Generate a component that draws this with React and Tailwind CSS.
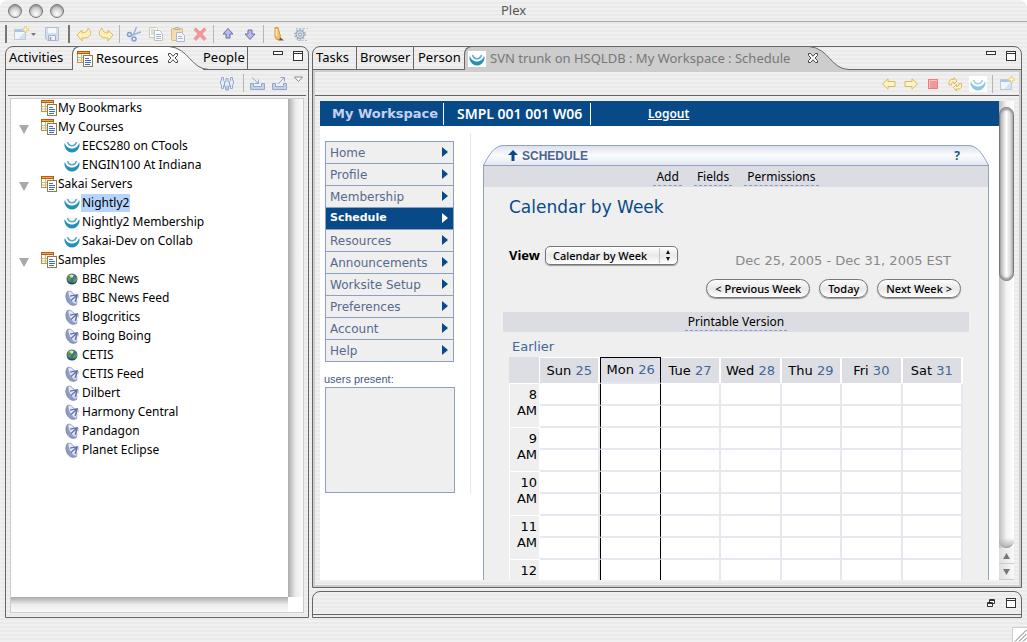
import React from "react";

const STRIPES = "bg-[repeating-linear-gradient(#f0f0f0_0_2px,#eaeaea_2px_4px)]";
const UI = "font-['Noto_Sans','Open_Sans',sans-serif]";
const WEB = "font-['DejaVu_Sans',sans-serif]";

/* ---------- icons ---------- */

function Icon({ children, className = "size-4", box = "0 0 16 16" }) {
  return (
    <svg viewBox={box} className={`${className} shrink-0`} fill="none" aria-hidden="true">
      {children}
    </svg>
  );
}

const NewIcon = () => (
  <Icon>
    <rect x="1.500" y="3.500" width="11" height="10" fill="#eef5fc" stroke="#c3c9cf" />
    <path d="M2 5h10" stroke="#a5c6ec" strokeWidth="2" />
    <path d="M5 13L12 6v7z" fill="#cfe3f7" />
    <path d="M12.500 0v7M9 3.500h7" stroke="#ead28a" strokeWidth="2.500" />
    <path d="M12.500 1.500v4M10.500 3.500h4" stroke="#fff8d0" />
  </Icon>
);
const SaveIcon = () => (
  <Icon>
    <path d="M1.500 1.500h13v13h-11l-2-2z" fill="#d4dfee" stroke="#b3bfd2" />
    <rect x="4" y="2" width="8" height="5" fill="#f5f8fc" />
    <path d="M4.500 9.500h7v5h-7z" fill="#eef2f8" stroke="#a3b2ca" />
    <path d="M6.500 11v3" stroke="#8fa2c0" strokeWidth="1.500" />
  </Icon>
);
const UndoIcon = ({ flip }) => (
  <Icon className={flip ? "size-4 -scale-x-100" : "size-4"}>
    <path
      d="M1 9l5-5v3c3 0 6-1.500 6-5 3 3 3.500 5.500 1.500 8-1.800 2-4.500 2-7.500 2v3z"
      fill="#fdf0bd"
      stroke="#dfb95e"
      strokeLinejoin="round"
    />
  </Icon>
);
const CutIcon = () => (
  <Icon>
    <path d="M10.500 1L7 9.500M15 6L6 9" stroke="#9db4d6" strokeWidth="1.500" />
    <circle cx="3.500" cy="8.500" r="2" stroke="#7f9fd0" strokeWidth="1.500" />
    <circle cx="8" cy="13" r="2" stroke="#7f9fd0" strokeWidth="1.500" />
  </Icon>
);
const CopyIcon = () => (
  <Icon>
    <path d="M1.500 1.500h7l1 1v9h-8z" fill="#f5f8fc" stroke="#d3c9a8" />
    <path d="M3 4h4M3 6h4M3 8h3" stroke="#b3c4e4" />
    <path d="M6.500 4.500h5l3 3v7h-8z" fill="#f7faff" stroke="#ccc19e" />
    <path d="M8 8.500h5M8 10.500h5M8 12.500h5" stroke="#9fb5df" />
  </Icon>
);
const PasteIcon = () => (
  <Icon>
    <rect x="1.500" y="2.500" width="11" height="12" rx="1" fill="#f4dcae" stroke="#d9b883" />
    <path d="M4.500 3.500l1-2h3l1 2z" fill="#e2e2e2" stroke="#b0b0b0" />
    <path d="M6.500 6.500h5l3 3v6h-8z" fill="#f4f7fc" stroke="#aab7cd" />
    <path d="M8 10.500h4M8 12.500h5" stroke="#a4b8dd" />
  </Icon>
);
const DeleteIcon = () => (
  <Icon>
    <path
      d="M2 3.500L4 2l4 4 4-4 2 1.500-4 4.500 4 4.500-2 2-4-4.200-4 4.200-2-2L6 8z"
      fill="#f29a9a"
      stroke="#ee9494"
      strokeLinejoin="round"
    />
  </Icon>
);
const MoveIcon = ({ down }) => (
  <Icon className={down ? "size-4 rotate-180" : "size-4"}>
    <path d="M8 2.500l5 5.500h-3v4H6V8H3z" fill="#b9b8f6" stroke="#6f6f9c" strokeLinejoin="round" />
  </Icon>
);
const MarkerIcon = () => (
  <Icon>
    <path d="M10 11l4 3.500H8z" fill="#6b5a3c" />
    <path d="M5 1.500h3l2.500 9-1.500 3H6.500L5 11z" fill="#f3c063" stroke="#cf9b4a" />
    <path d="M6.500 3v7" stroke="#fff0b8" strokeWidth="1.500" />
  </Icon>
);
const GearIcon = () => (
  <Icon>
    <path d="M4 2.500h12M6 14.500h9" stroke="#a9bfdd" strokeDasharray="2 1.500" />
    <circle cx="8" cy="8.500" r="5" stroke="#a5b6cd" strokeWidth="2" strokeDasharray="1.600 1.540" />
    <circle cx="8" cy="8.500" r="4" fill="#d5dbe3" stroke="#93a1b6" />
    <circle cx="8" cy="8.500" r="1.500" fill="#f3f5f8" stroke="#8796ad" />
  </Icon>
);
const CategoryIcon = () => (
  <Icon>
    <rect x="0.500" y="0.500" width="12" height="11" fill="#fdfaf0" stroke="#b49655" />
    <rect x="0" y="0" width="13" height="3" fill="#b85c14" />
    <path d="M1 1.500h11" stroke="#f2a548" />
    <path d="M4.500 3v8M1 6.500h5M1 9h5" stroke="#c9bc8a" />
    <rect x="6.500" y="4.500" width="9" height="11" fill="#fff" stroke="#8f7b48" />
    <path d="M8 7.500h4M8 9.500h6M8 11.500h6M8 13.500h5" stroke="#3f6cc4" />
  </Icon>
);
const SakaiIcon = ({ soft }) => (
  <Icon>
    <path
      d="M1 5C.2 6 .3 8 1 9.500 2.500 12.800 5 14.500 8 14.500s5.500-1.700 7-5c.7-1.500.8-3.500 0-4.500-.6 3-3.200 5.500-7 5.500S1.600 8 1 5z"
      fill={soft ? "#8cc9dd" : "#2490b8"}
    />
    <path
      d="M3.500 4c.8 2.500 2.500 3.700 4.500 3.700S11.700 6.500 12.500 4"
      stroke={soft ? "#9dd2e2" : "#58abc8"}
      strokeWidth="1.600"
    />
  </Icon>
);
const GlobeIcon = () => (
  <Icon>
    <circle cx="8" cy="8" r="5.500" fill="#3f6c94" />
    <path d="M3.500 5C5 3 7 3 8 3.500L9 6 7 8 6.500 11 4 9zM9.500 8l3-2 .5 3-2.500 3.500L9 10z" fill="#5f9a4a" />
    <path d="M5 4.500l3-1 2 1-2 2.500z" fill="#e3eecb" opacity="0.900" />
    <path d="M3 10a5.500 5.500 0 0010 0c-2.500 2.500-7 2.500-10 0z" fill="#26485f" />
  </Icon>
);
const FeedIcon = () => (
  <Icon>
    <path d="M4 1C.8 4 1.500 10 5 13.500c2 2 5 2.300 7.500 1z" fill="#8d9bc2" stroke="#7e8bb3" />
    <path d="M4 1.200C7 .5 10.500 4 12 8c1 2.800 1.200 5 .3 6.300C9 14 3.500 8 4 1.200z" fill="#e4e9f5" stroke="#98a4c8" />
    <path d="M6 6.200l8-1.700M13.500 5l-2.500 7M7 10.500l6-5.500" stroke="#5d6fa6" strokeWidth="1.200" />
    <path d="M14 5v3.500" stroke="#9aa6c8" />
  </Icon>
);
const PeopleIcon = () => (
  <Icon>
    <g fill="#e4ebf6" stroke="#93a8cc">
      <path d="M2.500 2.500h2v3l1 1v4h-1v3h-2v-3l-1-2V6l1-1z" />
      <path d="M13.500 2.500h-2v3l-1 1v4h1v3h2v-3l1-2V6l-1-1z" />
      <path d="M7 3.500h2v3l1.500 1v4H9.500v3.500h-3v-3.500h-1v-4l1.500-1z" />
    </g>
    <path d="M8 10.500V15" stroke="#93a8cc" />
  </Icon>
);
const TrayIcon = ({ out }) => (
  <Icon className="h-4 w-[17px]" box="0 0 17 16">
    <path d="M1.500 8.500h3v3h8v-3h3v6h-14z" fill="#c3d1e8" stroke="#93a8cc" />
    {out ? (
      <path d="M7 9l6.500-6.500M9.500 2.500h4v4" stroke="#93a8cc" />
    ) : (
      <path d="M3 2.500l6.500 6M9.500 4.500v4h-4" stroke="#93a8cc" />
    )}
  </Icon>
);
const MenuTriangle = () => (
  <Icon className="h-[7px] w-[11px]" box="0 0 11 7">
    <path d="M1.500 1h8L5.500 5.500z" fill="#fff" stroke="#888" />
  </Icon>
);
const NavArrow = ({ flip }) => (
  <Icon className={flip ? "size-4 -scale-x-100" : "size-4"}>
    <path d="M1.500 8L7 2.800V5.500h7v5H7v2.700z" fill="#fdf3c4" stroke="#dfb95e" strokeLinejoin="round" />
  </Icon>
);
const StopIcon = () => (
  <Icon>
    <rect x="3.500" y="3.500" width="9" height="9" fill="#f29a9a" stroke="#e88080" />
    <path d="M4.500 12V4.500H12" stroke="#f9c4c4" />
  </Icon>
);
const RefreshIcon = () => (
  <Icon>
    <path d="M2 9V6.500C2 4 4 3 7 3.500V1.500L10 5 7 8V6C5 6 4.500 6.500 4.500 9z" fill="#fdf3c4" stroke="#dfb95e" />
    <path d="M14.500 7.500V10c0 2.500-2 3.500-5 3v2l-3-3.500 3-3v2c2 0 2.500-.5 2.500-3z" fill="#fdf3c4" stroke="#dfb95e" />
  </Icon>
);
const CloseIcon = () => (
  <Icon className="size-3" box="0 0 12 12">
    <path
      d="M1.500 1.500h2L6 4.300 8.500 1.500h2v2L8 6l2.500 2.500v2h-2L6 7.700 3.500 10.500h-2v-2L4 6 1.500 3.500z"
      fill="#fff"
      stroke="#444"
    />
  </Icon>
);
const MinIcon = () => (
  <Icon className="h-3 w-2.5" box="0 0 10 12">
    <rect x="0.500" y="1.500" width="9" height="3" fill="#fff" stroke="#333" />
  </Icon>
);
const MaxIcon = () => (
  <Icon className="h-3 w-2.5" box="0 0 10 12">
    <rect x="0.500" y="1.500" width="9" height="9" fill="#fff" stroke="#333" />
    <path d="M0 3.500h10" stroke="#333" />
  </Icon>
);
const RestoreIcon = () => (
  <Icon className="h-3 w-2.5" box="0 0 10 12">
    <path d="M3.500 2.500h5v4h-5zM3 3.500h6" fill="#fff" stroke="#333" />
    <path d="M1.500 5.500h5v4h-5zM1 6.500h6" fill="#fff" stroke="#333" />
  </Icon>
);

/* ---------- small parts ---------- */

const IconButton = ({ label, className = "", children }) => (
  <button type="button" aria-label={label} className={`flex shrink-0 items-center ${className}`}>
    {children}
  </button>
);
const Sep = () => <span className="-ml-px h-[18px] w-px shrink-0 bg-[#b5b5b5]" />;

function Tab({ children, className = "" }) {
  return (
    <button type="button" className={`shrink-0 border-b border-[#666] whitespace-nowrap ${className}`}>
      {children}
    </button>
  );
}

function ActiveTab({ icon, label, className, fillId, from, to, textClass }) {
  return (
    <>
      <div
        className={`-mt-px flex min-w-0 items-center rounded-tl-lg border-t border-l border-[#666] ${className}`}
      >
        {icon}
        <button type="button" className={`whitespace-nowrap ${textClass}`}>
          {label}
        </button>
      </div>
      <IconButton label={`Close ${label}`} className="relative z-10 -mt-px -mr-3">
        <CloseIcon />
      </IconButton>
      <svg viewBox="0 0 44 24" className="-mt-px h-6 w-11 shrink-0" aria-hidden="true">
        <defs>
          <linearGradient id={fillId} x1="0" y1="0" x2="0" y2="1">
            <stop offset="0" stopColor={from} />
            <stop offset="1" stopColor={to} />
          </linearGradient>
        </defs>
        <path d="M0 .5h2C22 2 24 23.500 42 23.500V24H0z" fill={`url(#${fillId})`} />
        <path d="M0 .5h2C22 2 24 23.500 42 23.500h2" fill="none" stroke="#666" />
      </svg>
    </>
  );
}

/* ---------- left view ---------- */

const TREE = [
  { label: "My Bookmarks" },
  { label: "My Courses", items: [["EECS280 on CTools", "sakai"], ["ENGIN100 At Indiana", "sakai"]] },
  {
    label: "Sakai Servers",
    items: [["Nightly2", "sakai", true], ["Nightly2 Membership", "sakai"], ["Sakai-Dev on Collab", "sakai"]],
  },
  {
    label: "Samples",
    items: [
      ["BBC News", "globe"],
      ["BBC News Feed", "feed"],
      ["Blogcritics", "feed"],
      ["Boing Boing", "feed"],
      ["CETIS", "globe"],
      ["CETIS Feed", "feed"],
      ["Dilbert", "feed"],
      ["Harmony Central", "feed"],
      ["Pandagon", "feed"],
      ["Planet Eclipse", "feed"],
    ],
  },
];
const LEAF = { sakai: SakaiIcon, globe: GlobeIcon, feed: FeedIcon };

function Tree() {
  return (
    <ul className="min-w-0 flex-1 overflow-hidden bg-white text-[12px]">
      {TREE.map((group) => (
        <li key={group.label}>
          <div className="flex h-[19px] items-center pb-px pl-2">
            <span className="flex w-[22px] shrink-0 pt-1">
              {group.items && (
                <IconButton label={`Collapse ${group.label}`}>
                  <svg viewBox="0 0 10 9" className="h-[9px] w-2.5" aria-hidden="true">
                    <path d="M0 0h10L5 9z" fill="#a8a8a8" />
                  </svg>
                </IconButton>
              )}
            </span>
            <CategoryIcon />
            <button type="button" className="ml-px leading-[18px]">
              {group.label}
            </button>
          </div>
          {group.items && (
            <ul>
              {group.items.map(([label, kind, selected]) => {
                const Leaf = LEAF[kind];
                return (
                  <li key={label} className="flex h-[19px] items-center pb-px pl-[53px]">
                    <Leaf />
                    <button type="button" className={`ml-px px-px leading-[18px] ${selected ? "bg-[#b5d5ff]" : ""}`}>
                      {label}
                    </button>
                  </li>
                );
              })}
            </ul>
          )}
        </li>
      ))}
    </ul>
  );
}

function LeftView() {
  return (
    <section className="flex w-[304px] shrink-0 flex-col rounded-t-lg border border-[#666]">
      <div className="flex h-[23px] text-[13px]">
        <Tab className="w-[66px] pl-[3px] text-left">Activities</Tab>
        <ActiveTab
          icon={<CategoryIcon />}
          label="Resources"
          className="w-[95px] gap-[3px] bg-linear-to-b from-white to-[#efefef] pl-1"
          textClass="text-black"
          fillId="tab-resources"
          from="#ffffff"
          to="#efefef"
        />
        <Tab className="z-10 -ml-2 w-[45px] border-r text-left">People</Tab>
        <div className="flex flex-1 items-start justify-end gap-2.5 border-b border-[#666] pt-[3px] pr-[5px]">
          <IconButton label="Minimize">
            <MinIcon />
          </IconButton>
          <IconButton label="Maximize">
            <MaxIcon />
          </IconButton>
        </div>
      </div>
      <div className="mx-0.5 flex h-[26px] items-center justify-end gap-[5px] border-b border-[#666] pr-0.5">
        <IconButton label="People view" className="mr-1">
          <PeopleIcon />
        </IconButton>
        <Sep />
        <IconButton label="Import">
          <TrayIcon />
        </IconButton>
        <IconButton label="Export">
          <TrayIcon out />
        </IconButton>
        <IconButton label="View menu" className="h-full items-start pt-1.5">
          <MenuTriangle />
        </IconButton>
      </div>
      <div className="mx-1 mt-0.5 mb-1 grid min-h-0 flex-1 grid-cols-[1fr_15px] grid-rows-[1fr_15px] border border-[#ccc]">
        <Tree />
        <div className="bg-linear-to-r from-[#ababab] via-[#ececec] to-[#fafafa]" />
        <div className="bg-linear-to-b from-[#ababab] via-[#ececec] to-[#fafafa]" />
        <div className="bg-white" />
      </div>
    </section>
  );
}

/* ---------- web page in the right view ---------- */

const NAV = [
  "Home",
  "Profile",
  "Membership",
  "Schedule",
  "Resources",
  "Announcements",
  "Worksite Setup",
  "Preferences",
  "Account",
  "Help",
];

function SiteNav() {
  return (
    <div className="w-[130px] shrink-0">
      <nav className="mt-[15px] mr-px border border-b-0 border-[#8f9fc4] text-[12px]">
        {NAV.map((name) => {
          const on = name === "Schedule";
          return (
            <a
              key={name}
              href="#"
              className={`flex h-[22px] items-center justify-between border-b border-[#8f9fc4] pr-[5px] pl-1 ${
                on ? "bg-[#084a88] font-bold text-white" : "bg-[#efefef] text-[#56698f]"
              }`}
            >
              <span className={on ? "text-[11px]" : ""}>{name}</span>
              <svg viewBox="0 0 6 10" className="mb-0.5 h-2.5 w-1.5" aria-hidden="true">
                <path d="M0 0l6 5-6 5z" fill={on ? "#fff" : "#084a88"} />
              </svg>
            </a>
          );
        })}
      </nav>
      <h2 className="mt-[9px] -ml-px font-['Liberation_Sans',sans-serif] text-[11px] leading-4 text-[#46588a]">
        users present:
      </h2>
      <div className="h-[106px] border border-[#8f9fc4] bg-[#efefef]" />
    </div>
  );
}

const DAYS = [
  ["Sun", 25],
  ["Mon", 26],
  ["Tue", 27],
  ["Wed", 28],
  ["Thu", 29],
  ["Fri", 30],
  ["Sat", 31],
];
const SLOTS = ["8 AM", null, "9 AM", null, "10 AM", null, "11 AM", null, "12"];

function WeekTable() {
  return (
    <table className="w-full table-fixed border-separate border-spacing-0 text-[13px]">
      <thead>
        <tr className="h-[27px]">
          <th className="w-[31px] border-r border-b border-white bg-[#dcdee4] p-0" aria-label="Time" />
          {DAYS.map(([day, date]) => {
            const today = day === "Mon";
            return (
              <th
                key={day}
                className={`p-0 font-normal whitespace-nowrap ${
                  today
                    ? "border border-b-2 border-black border-b-[#e6e8f0] bg-[#dfe0e7]"
                    : "border-t border-r-2 border-b border-white bg-[#dcdee4]"
                }`}
              >
                {day} <a href="#" className="text-[#3f6797]">{date}</a>
              </th>
            );
          })}
        </tr>
      </thead>
      <tbody>
        {SLOTS.map((slot, i) => (
          <tr key={i} className="h-[22px]">
            {slot && (
              <th
                rowSpan={slot === "12" ? 1 : 2}
                className="border border-t-0 border-white bg-[#efefef] py-0 pt-[3px] pr-0.5 pl-1 text-right align-top leading-4 font-normal"
              >
                {slot}
              </th>
            )}
            {DAYS.map(([day]) => (
              <td
                key={day}
                className={`border-b-2 bg-white p-0 ${
                  day === "Mon"
                    ? "border-r border-l border-black border-b-[#e6e8f0]"
                    : "border-r-2 border-[#e6e8f0]"
                }`}
              />
            ))}
          </tr>
        ))}
      </tbody>
    </table>
  );
}

const PillButton = ({ children }) => (
  <button
    type="button"
    className={`h-[19px] rounded-full border border-[#777] bg-linear-to-b from-[#fdfdfd] via-[#e8e8e8] to-white px-2 text-[11px] leading-4 font-medium shadow-[0_1px_1px_#999] ${UI}`}
  >
    {children}
  </button>
);
const DashedLink = ({ children }) => (
  <a href="#" className="border-b border-dashed border-[#8a9bc8] px-[3px] leading-[17px]">
    {children}
  </a>
);

function CapCorner({ flip }) {
  return (
    <svg viewBox="0 0 28 20" className={`h-5 w-7 shrink-0 ${flip ? "-scale-x-100" : ""}`} aria-hidden="true">
      <defs>
        <linearGradient id={flip ? "cap-r" : "cap-l"} x1="0" y1="0" x2="0" y2="1">
          <stop offset="0" stopColor="#dbe0ea" />
          <stop offset="0.500" stopColor="#fbfcfe" />
          <stop offset="1" stopColor="#e3e6ee" />
        </linearGradient>
      </defs>
      <path
        d="M.5 20C4 14 8 6 13 3c3-2 5-2.500 8-2.500h7V20z"
        fill={`url(#${flip ? "cap-r" : "cap-l"})`}
      />
      <path d="M.5 20C4 14 8 6 13 3c3-2 5-2.500 8-2.500h7" fill="none" stroke="#8fa3c9" />
    </svg>
  );
}

function Portlet() {
  return (
    <div className="mt-[19px] mr-2.5 ml-3 min-w-0 flex-1">
      <div className="flex h-5">
        <CapCorner />
        <div className="flex flex-1 items-center gap-1 border-t border-[#8fa3c9] bg-linear-to-b from-[#dbe0ea] via-[#fbfcfe] to-[#e3e6ee]">
          <svg viewBox="0 0 10 11" className="-ml-[3px] h-[11px] w-2.5" aria-hidden="true">
            <path d="M5 0l5 5H6.500v6h-3V5H0z" fill="#084a88" />
          </svg>
          <h2 className="flex-1 font-['Liberation_Sans',sans-serif] text-[12px] font-bold text-[#4c648f]">SCHEDULE</h2>
          <a href="#" className={`mr-px text-[12px] font-bold text-[#1d5595] ${UI}`}>
            ?
          </a>
        </div>
        <CapCorner flip />
      </div>
      <div className="border-x border-t border-[#8fa3c9] bg-[#efefef]">
        <div className={`flex h-[21px] items-center justify-center gap-3 bg-[#dcdde3] text-[12px] ${UI}`}>
          <DashedLink>Add</DashedLink>
          <DashedLink>Fields</DashedLink>
          <DashedLink>Permissions</DashedLink>
        </div>
        <div className="px-[25px]">
          <h1 className="mt-1.5 text-[17px] leading-7 text-[#084a88]">Calendar by Week</h1>
          <div className="mt-[25px] flex justify-between">
            <div className="flex h-[19px] items-center gap-[5px]">
              <label htmlFor="view" className={`text-[13px] font-bold ${UI}`}>
                View
              </label>
              <div className="relative">
                <select
                  id="view"
                  className={`block h-[19px] w-[133px] appearance-none rounded-[5px] border border-[#777] bg-linear-to-b from-white via-[#e9e9e9] to-white pl-[7px] text-[11px] leading-4 font-medium shadow-[0_1px_1px_#999] ${UI}`}
                >
                  <option>Calendar by Week</option>
                </select>
                <svg
                  viewBox="0 0 18 17"
                  className="pointer-events-none absolute top-px right-px h-[17px] w-[18px]"
                  aria-hidden="true"
                >
                  <path d="M.5 1v15" stroke="#c4c4c4" />
                  <path d="M9 3l2 4H7zM9 14l2-4H7z" fill="#111" />
                </svg>
              </div>
            </div>
            <div className="mr-0.5 flex flex-col items-end">
              <p className="mt-[5px] mr-2.5 text-[13px] leading-5 whitespace-nowrap text-[#888]">
                Dec 25, 2005 - Dec 31, 2005 EST
              </p>
              <div className="mt-2 flex gap-[9px]">
                <PillButton>&lt; Previous Week</PillButton>
                <PillButton>Today</PillButton>
                <PillButton>Next Week &gt;</PillButton>
              </div>
            </div>
          </div>
          <div className={`-mx-1.5 mt-3.5 flex h-5 items-center justify-center bg-[#dcdde3] text-[12px] ${UI}`}>
            <DashedLink>Printable Version</DashedLink>
          </div>
          <a href="#" className="mt-1.5 mb-0.5 ml-[3px] block text-[13px] leading-[17px] text-[#3f6797]">
            Earlier
          </a>
          <WeekTable />
        </div>
      </div>
    </div>
  );
}

function ScrollBar() {
  return (
    <div className="flex w-[15px] shrink-0 flex-col bg-linear-to-r from-[#bdbdbd] via-[#f3f3f3] to-white">
      <div className="mt-1.5 h-[174px] rounded-full border border-[#777] bg-linear-to-r from-[#b0b0b0] via-white to-[#bdbdbd] shadow-[inset_0_2px_2px_#999,inset_0_-2px_2px_#999]" />
      <div className="flex-1" />
      <div className="h-2.5 rounded-b-full border-b border-[#999] bg-linear-to-b from-transparent to-[#b5b5b5]" />
      {["M4 0l4 7H0z", "M0 0h8L4 7z"].map((d, i) => (
        <button
          key={d}
          type="button"
          aria-label={i ? "Scroll down" : "Scroll up"}
          className="flex h-4 items-center justify-center border-b border-[#ccc] bg-linear-to-r from-[#dedede] to-[#fafafa]"
        >
          <svg viewBox="0 0 8 7" className="h-1.5 w-[7px]" aria-hidden="true">
            <path d={d} fill="#777" />
          </svg>
        </button>
      ))}
    </div>
  );
}

function WebPage() {
  return (
    <div className={`flex min-h-0 flex-1 bg-white text-black ${WEB}`}>
      <div className="flex min-w-0 flex-1 flex-col overflow-hidden">
        <header className="flex h-[25px] shrink-0 items-center bg-[#084a88] text-white">
          <a href="#" className="w-[124px] border-r border-white pl-3 text-[13px] leading-[22px] font-bold text-[#c3d2f4]">
            My Workspace
          </a>
          <a href="#" className={`w-[147px] border-r border-white pl-[13px] text-[14px] leading-[22px] font-semibold ${UI}`}>
            SMPL 001 001 W06
          </a>
          <a href="#" className={`ml-[57px] text-[12px] font-semibold underline ${UI}`}>
            Logout
          </a>
        </header>
        <div className="flex min-h-0 flex-1 pl-[5px]">
          <SiteNav />
          <div className="mt-[7px] ml-[15px] h-[360px] w-px shrink-0 bg-[#e9e9e9]" />
          <Portlet />
        </div>
      </div>
      <ScrollBar />
    </div>
  );
}

function RightView() {
  return (
    <section className="flex min-h-0 flex-1 flex-col rounded-t-lg border border-[#666]">
      <div className="flex h-[23px] text-[13px]">
        <Tab className="w-11 border-r pl-[3px] text-left">Tasks</Tab>
        <Tab className="w-[57px] border-r pl-[3px] text-left">Browser</Tab>
        <Tab className="w-[50px] pl-1 text-left">Person</Tab>
        <ActiveTab
          icon={
            <span className="bg-white px-px">
              <SakaiIcon />
            </span>
          }
          label="SVN trunk on HSQLDB : My Workspace : Schedule"
          className="w-[343px] gap-1 overflow-hidden bg-[#cdcdcd] pl-[3px]"
          textClass="text-[#777]"
          fillId="tab-schedule"
          from="#cdcdcd"
          to="#cdcdcd"
        />
        <div className="flex flex-1 items-start justify-end gap-2.5 border-b border-[#666] pt-[3px] pr-[5px]">
          <IconButton label="Minimize">
            <MinIcon />
          </IconButton>
          <IconButton label="Maximize">
            <MaxIcon />
          </IconButton>
        </div>
      </div>
      <div className="flex min-h-0 flex-1 flex-col border-2 border-[#cdcdcd]">
        <div className="flex h-6 shrink-0 items-center justify-end gap-1.5 border-b border-[#666] pr-1">
          <IconButton label="Back">
            <NavArrow />
          </IconButton>
          <IconButton label="Forward">
            <NavArrow flip />
          </IconButton>
          <IconButton label="Stop">
            <StopIcon />
          </IconButton>
          <IconButton label="Refresh">
            <RefreshIcon />
          </IconButton>
          <IconButton label="Sakai home" className="bg-white px-px">
            <SakaiIcon soft />
          </IconButton>
          <Sep />
          <IconButton label="New window">
            <NewIcon />
          </IconButton>
        </div>
        <div className="flex min-h-0 flex-1 p-[5px]">
          <WebPage />
        </div>
      </div>
    </section>
  );
}

/* ---------- window ---------- */

function TitleBar() {
  return (
    <header className="grid h-[22px] shrink-0 grid-cols-[1fr_auto_1fr] items-center border-b border-[#aaa] px-2">
      <div className="flex gap-[7px]">
        {["Close", "Minimize", "Zoom"].map((name) => (
          <button
            key={name}
            type="button"
            aria-label={`${name} window`}
            className="size-3.5 rounded-full border border-[#777] bg-[radial-gradient(circle_at_50%_75%,#fff,#b9b9b9_80%)] shadow-[inset_0_1px_2px_#888]"
          />
        ))}
      </div>
      <h1 className="self-start text-[13px] leading-5 text-[#555]">Plex</h1>
    </header>
  );
}

function ToolBar() {
  return (
    <div className="flex h-6 shrink-0 items-center gap-1.5 pl-[5px]">
      <span className="h-[18px] w-0.5 bg-[#777]" />
      <IconButton label="New" className="gap-0.5">
        <NewIcon />
        <svg viewBox="0 0 5 3" className="h-[3px] w-[5px]" aria-hidden="true">
          <path d="M0 0h5L2.500 3z" fill="#777" />
        </svg>
      </IconButton>
      <IconButton label="Save" className="ml-0.5">
        <SaveIcon />
      </IconButton>
      <span className="ml-0.5 h-[18px] w-0.5 bg-[#777]" />
      <IconButton label="Undo">
        <UndoIcon />
      </IconButton>
      <IconButton label="Redo">
        <UndoIcon flip />
      </IconButton>
      <Sep />
      <IconButton label="Cut">
        <CutIcon />
      </IconButton>
      <IconButton label="Copy">
        <CopyIcon />
      </IconButton>
      <IconButton label="Paste">
        <PasteIcon />
      </IconButton>
      <IconButton label="Delete">
        <DeleteIcon />
      </IconButton>
      <Sep />
      <IconButton label="Move up">
        <MoveIcon />
      </IconButton>
      <IconButton label="Move down">
        <MoveIcon down />
      </IconButton>
      <Sep />
      <IconButton label="Highlight">
        <MarkerIcon />
      </IconButton>
      <IconButton label="Settings">
        <GearIcon />
      </IconButton>
    </div>
  );
}

export default function App() {
  return (
    <div className={`flex h-screen flex-col overflow-hidden rounded-t-lg text-black ${STRIPES} ${UI}`}>
      <TitleBar />
      <ToolBar />
      <main className="flex min-h-0 flex-1 gap-[3px] px-[5px]">
        <LeftView />
        <div className="flex min-w-0 flex-1 flex-col gap-[3px]">
          <RightView />
          <section className="h-[27px] shrink-0 rounded-t-lg border border-[#666] pb-0.5">
            <div className="flex h-full items-center justify-end gap-2.5 border-b border-[#666] pr-[5px]">
              <IconButton label="Restore">
                <RestoreIcon />
              </IconButton>
              <IconButton label="Maximize">
                <MaxIcon />
              </IconButton>
            </div>
          </section>
        </div>
      </main>
      <footer className="flex h-6 shrink-0 items-end justify-end">
        <svg viewBox="0 0 15 15" className="size-[15px]" aria-hidden="true">
          <path d="M0 0h15v15H0z" fill="#fff" />
          <path d="M.5 15V.5H15" fill="none" stroke="#ccc" />
          <path d="M3 14.500L14.500 3M7 14.500L14.500 7M11 14.500l3.500-3.500" stroke="#777" />
        </svg>
      </footer>
    </div>
  );
}
